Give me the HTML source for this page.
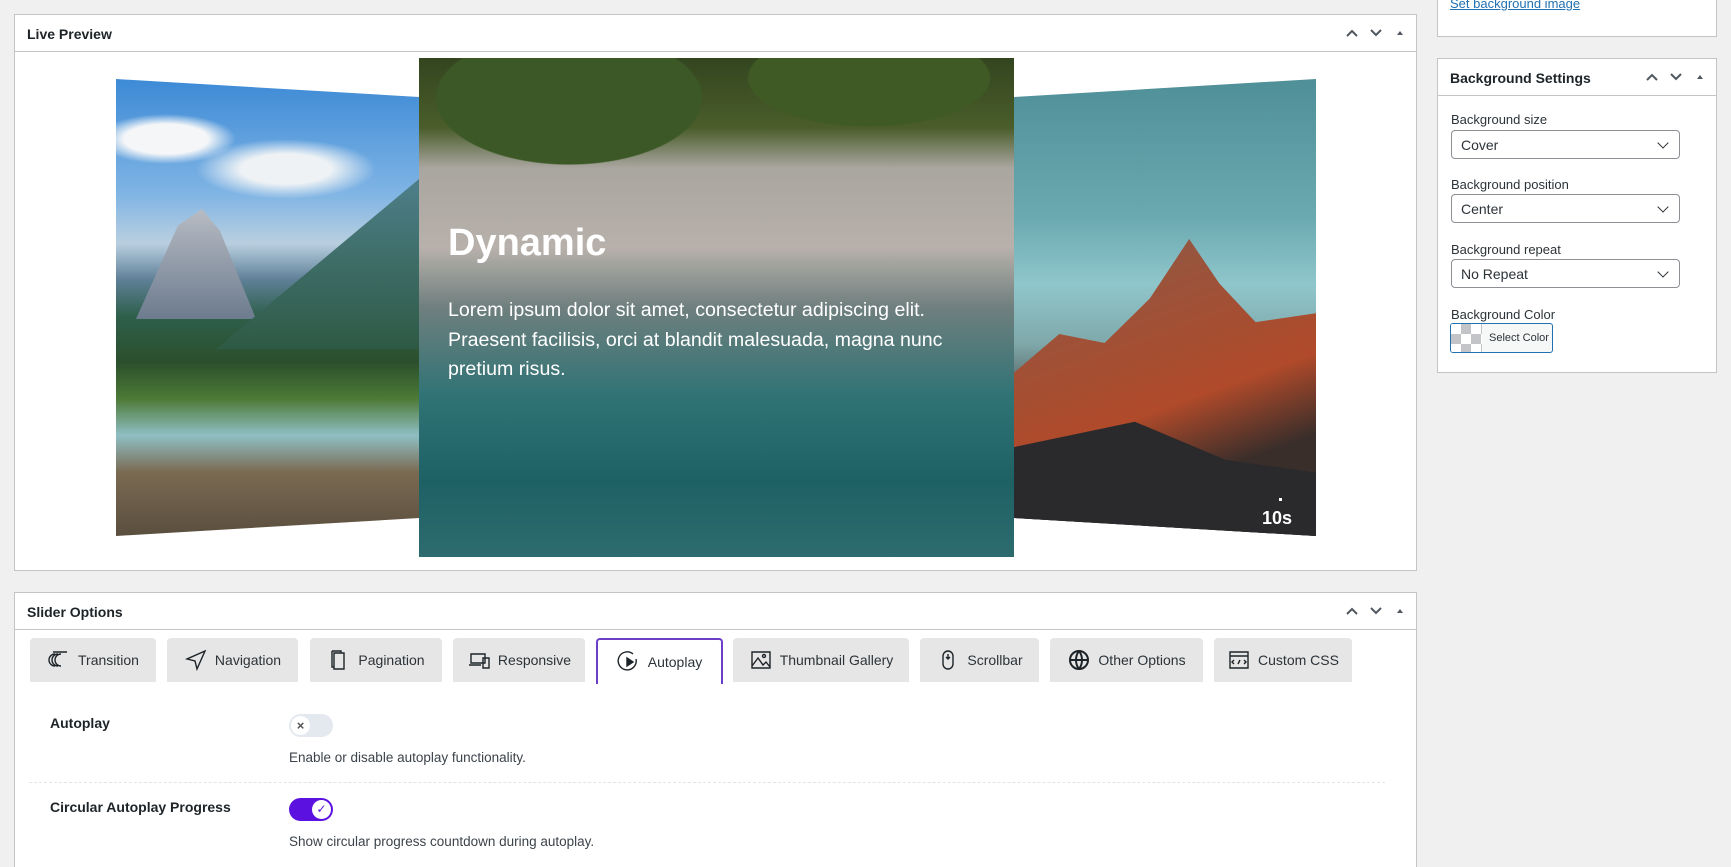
<!DOCTYPE html>
<html style="overflow:hidden;height:867px"><head><meta charset="utf-8"><style>
*{box-sizing:border-box;margin:0;padding:0}
body{width:1731px;height:867px;background:#f0f0f1;font-family:"Liberation Sans",sans-serif;color:#1d2327;position:relative;overflow:hidden;font-size:14px}
.panel{position:absolute;background:#fff;border:1px solid #c3c4c7}
.hd{position:absolute;left:0;right:0;top:0;height:37px;border-bottom:1px solid #c3c4c7;font-size:14px;font-weight:bold;padding:11px 12px;color:#1d2327}
.ctl{position:absolute;right:8px;top:11px;display:flex;gap:8px}
.ctl svg{width:16px;height:14px;fill:none;stroke:#50575e;stroke-width:2}
.abs{position:absolute}
.tab{position:absolute;top:638px;height:44px;background:#e6e6e6;border-radius:4px 4px 0 0;display:flex;align-items:center;justify-content:center;gap:7px;font-size:14px;color:#2c3338}
.tab svg{width:24px;height:24px;fill:none;stroke:#1d2327;stroke-width:1.4}
.lbl{font-size:13px;color:#2c3338;position:absolute;left:1451px}
.sel{position:absolute;left:1451px;width:229px;height:29px;border:1px solid #8c8f94;border-radius:4px;font-size:14px;padding:6px 9px;color:#2c3338}
.sel:after{content:"";position:absolute;right:12px;top:8px;width:7px;height:7px;border-right:1.6px solid #2c3338;border-bottom:1.6px solid #2c3338;transform:rotate(45deg)}
</style></head><body>

<div class="panel" style="left:1437px;top:0;width:280px;height:37px;border-top:none">
<span class="abs" style="left:12px;top:-4px;font-size:13px;color:#2271b1;text-decoration:underline">Set background image</span></div>

<div class="panel" style="left:14px;top:14px;width:1403px;height:557px">
<div class="hd">Live Preview<div class="ctl"><svg viewBox="0 0 16 14"><path d="M3 10l5-5 5 5"/></svg><svg viewBox="0 0 16 14"><path d="M3 4l5 5 5-5"/></svg><svg viewBox="0 0 16 14"><path d="M5 9h6L8 5z" fill="#50575e" stroke="none"/></svg></div></div>
</div>
<div class="abs" style="left:116px;top:79px;width:303px;height:457px;clip-path:polygon(0 0,100% 18px,100% 439px,0 100%);background:
radial-gradient(ellipse 70px 25px at 50px 60px,#f4f6f8 60%,transparent),
radial-gradient(ellipse 90px 30px at 170px 90px,#eef2f5 50%,transparent),
linear-gradient(180deg,#3d8ad6 0%,#7fb4e4 25%,#b9cfe0 36%,#5e7f96 44%,#2e5f4a 52%,#2b4f2c 62%,#4d7a36 70%,#8fbfc4 78%,#7a6a52 86%,#5a4e3e 100%)">
<div class="abs" style="left:20px;top:130px;width:120px;height:110px;background:linear-gradient(180deg,#b8bcc4,#6c7b8e);clip-path:polygon(0 100%,35% 15%,55% 0,70% 20%,100% 100%)"></div>
<div class="abs" style="left:100px;top:100px;width:203px;height:170px;background:linear-gradient(180deg,#4e7f8a,#2e5a44);clip-path:polygon(0 100%,80% 20%,100% 0,100% 100%)"></div>
</div>
<div class="abs" style="left:1014px;top:79px;width:302px;height:457px;clip-path:polygon(0 18px,100% 0,100% 100%,0 439px);background:linear-gradient(180deg,#4f8f97 0%,#6aa9b0 30%,#8fc6cb 45%,#7fa8aa 58%,#3a3330 75%,#2b2b2b 100%)">
<div class="abs" style="left:0;top:160px;width:302px;height:297px;background:linear-gradient(160deg,#8a5a48,#b04a2a 55%,#3a2e2a 75%);clip-path:polygon(0 45%,15% 32%,30% 35%,45% 20%,58% 0,68% 15%,80% 28%,100% 25%,100% 100%,0 100%)"></div>
<div class="abs" style="left:0;top:330px;width:302px;height:127px;background:#2a2a2c;clip-path:polygon(0 30%,40% 10%,70% 40%,100% 50%,100% 100%,0 100%)"></div>
</div>
<div class="abs" style="left:1262px;top:508px;color:#fff;font-weight:bold;font-size:18px">10s</div>
<div class="abs" style="left:1279px;top:498px;width:3px;height:3px;background:#fff"></div>
<div class="abs" style="left:419px;top:58px;width:595px;height:499px;background:
radial-gradient(ellipse 200px 80px at 450px 20px,#3f5a24 60%,transparent 61%),
radial-gradient(ellipse 220px 110px at 150px 40px,#3c5826 60%,transparent 61%),
linear-gradient(180deg,#33451f 0%,#4a5d2a 14%,#a9a59f 22%,#b8b1ab 38%,#6f7f7e 50%,#2f7375 68%,#1e6165 85%,#2d6b6e 100%)"></div>
<div class="abs" style="left:448px;top:222px;color:#fff;font-size:38px;font-weight:600">Dynamic</div>
<div class="abs" style="left:448px;top:296px;width:545px;color:#fff;font-size:19.6px;line-height:29.5px">Lorem ipsum dolor sit amet, consectetur adipiscing elit. Praesent facilisis, orci at blandit malesuada, magna nunc pretium risus.</div>

<div class="panel" style="left:14px;top:592px;width:1403px;height:275px;border-bottom:none">
<div class="hd">Slider Options<div class="ctl"><svg viewBox="0 0 16 14"><path d="M3 10l5-5 5 5"/></svg><svg viewBox="0 0 16 14"><path d="M3 4l5 5 5-5"/></svg><svg viewBox="0 0 16 14"><path d="M5 9h6L8 5z" fill="#50575e" stroke="none"/></svg></div></div>
</div>
<div class="tab" style="left:30px;width:126px"><svg viewBox="0 0 24 24"><path d="M8 6a6 6 0 1 0 0 12M11 6a6 6 0 1 0 0 12M14 6a6 6 0 1 0 0 12M6 4h14"/></svg>Transition</div>
<div class="tab" style="left:167px;width:131px"><svg viewBox="0 0 24 24"><path d="M21 3L3 11l8 2 2 8z"/></svg>Navigation</div>
<div class="tab" style="left:310px;width:132px"><svg viewBox="0 0 24 24"><path d="M7 5h10v16H7zM5 3h9v2M5 3v16h2"/></svg>Pagination</div>
<div class="tab" style="left:453px;width:132px"><svg viewBox="0 0 24 24"><path d="M4 6h14v9H4zM2 17h12M16 10h6v10h-6z"/></svg>Responsive</div>
<div class="tab" style="left:596px;width:127px;background:#fff;border:2px solid #6c3fc9;border-bottom:none;height:46px"><svg viewBox="0 0 24 24"><path d="M16 4a9 9 0 1 0 3 5"/><path d="M10 8l6 4-6 4z" fill="#1d2327"/></svg>Autoplay</div>
<div class="tab" style="left:733px;width:176px"><svg viewBox="0 0 24 24"><path d="M3 4h18v16H3zM3 18l6-8 5 7 3-3 4 5"/><circle cx="15" cy="8" r="1.5"/></svg>Thumbnail Gallery</div>
<div class="tab" style="left:920px;width:119px"><svg viewBox="0 0 24 24"><rect x="7" y="3" width="10" height="18" rx="5"/><path d="M12 6v5M10 9l2 2 2-2"/></svg>Scrollbar</div>
<div class="tab" style="left:1050px;width:153px"><svg viewBox="0 0 24 24" style="stroke-width:2"><circle cx="12" cy="12" r="9"/><path d="M3 12h18M12 3c-4 5-4 13 0 18M12 3c4 5 4 13 0 18"/></svg>Other Options</div>
<div class="tab" style="left:1214px;width:138px"><svg viewBox="0 0 24 24"><path d="M3 4h18v16H3zM3 8h18M7 12l-2 2 2 2M17 12l2 2-2 2M11 16l2-4"/></svg>Custom CSS</div>

<div class="abs" style="left:50px;top:715px;font-size:14px;font-weight:600">Autoplay</div>
<div class="abs" style="left:289px;top:714px;width:44px;height:23px;border-radius:12px;background:#e4e8ef"><div class="abs" style="left:2px;top:2px;width:19px;height:19px;border-radius:50%;background:#fff;color:#555;font-size:13px;font-weight:bold;text-align:center;line-height:19px">×</div></div>
<div class="abs" style="left:289px;top:750px;font-size:13.5px;color:#3c434a">Enable or disable autoplay functionality.</div>
<div class="abs" style="left:29px;top:782px;width:1356px;border-top:1px dashed #e2e4e7"></div>
<div class="abs" style="left:50px;top:799px;font-size:14px;font-weight:600">Circular Autoplay Progress</div>
<div class="abs" style="left:289px;top:798px;width:44px;height:23px;border-radius:12px;background:#5b12e0"><div class="abs" style="right:2px;top:2px;width:19px;height:19px;border-radius:50%;background:#fff;color:#5b12e0;font-size:12px;text-align:center;line-height:19px">✓</div></div>
<div class="abs" style="left:289px;top:834px;font-size:13.5px;color:#3c434a">Show circular progress countdown during autoplay.</div>

<div class="panel" style="left:1437px;top:58px;width:280px;height:315px">
<div class="hd" style="height:37px;font-size:14px">Background Settings<div class="ctl"><svg viewBox="0 0 16 14"><path d="M3 10l5-5 5 5"/></svg><svg viewBox="0 0 16 14"><path d="M3 4l5 5 5-5"/></svg><svg viewBox="0 0 16 14"><path d="M5 9h6L8 5z" fill="#50575e" stroke="none"/></svg></div></div></div>
<div class="lbl" style="top:112px">Background size</div>
<div class="sel" style="top:130px">Cover</div>
<div class="lbl" style="top:177px">Background position</div>
<div class="sel" style="top:194px">Center</div>
<div class="lbl" style="top:242px">Background repeat</div>
<div class="sel" style="top:259px">No Repeat</div>
<div class="lbl" style="top:307px">Background Color</div>
<div class="abs" style="left:1450px;top:323px;width:103px;height:30px;border:1px solid #2271b1;border-radius:3px;background:#f6f7f7;overflow:hidden">
<div class="abs" style="left:0;top:0;width:31px;height:30px;background:repeating-conic-gradient(#c3c4c7 0 25%,#fff 0 50%) 0 0/20px 20px"></div>
<span class="abs" style="left:38px;top:8px;font-size:11px;color:#2c3338">Select Color</span></div>
</body></html>
